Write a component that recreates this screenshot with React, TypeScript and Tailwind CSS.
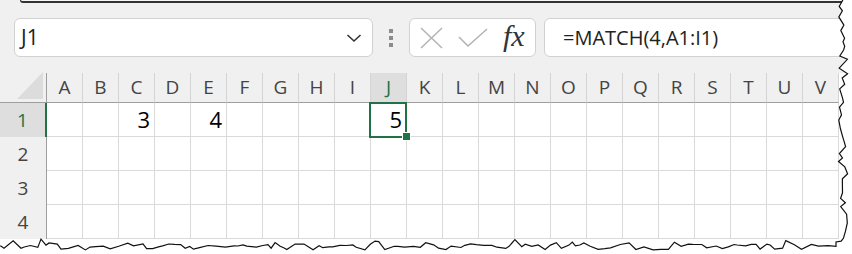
import React from "react";

const cols = "ABCDEFGHIJKLMNOPQRSTUV".split("");
const rows = [1, 2, 3, 4];
const values: Record<string, string> = { C1: "3", E1: "4", J1: "5" };

// deterministic jitter for the torn paper edge
function rng(seed: number) {
  let s = seed;
  return () => {
    s = (s * 9301 + 49297) % 233280;
    return s / 233280;
  };
}

function TornEdge() {
  const r = rng(7);
  const right: [number, number][] = [];
  let y = 0;
  while (y < 242) {
    right.push([838 + r() * 10, y]);
    y += 3 + r() * 6;
  }
  right.push([836, 242]);
  const bottom: [number, number][] = [];
  let x = 836;
  while (x > 0) {
    const bump = r() > 0.85 ? -5 : 0;
    bottom.push([x, 244 + r() * 6 + bump]);
    x -= 3 + r() * 7;
  }
  bottom.push([0, 246]);
  const line = [...right, ...bottom];
  const pts = line.map(p => `${p[0].toFixed(1)},${p[1].toFixed(1)}`).join(" ");
  const fill = `852,0 ${pts} 0,254 852,254`;
  return (
    <svg className="absolute left-0 top-0 pointer-events-none z-20" width={852} height={254}>
      <polygon points={fill} fill="#ffffff" />
      <polyline points={pts} fill="none" stroke="#111" strokeWidth={1.2} />
    </svg>
  );
}

function FormulaBar() {
  return (
    <div className="h-[73px] bg-[#f0f0f0] flex flex-col">
      <div className="h-[3px] ml-[20px] border-b-2 border-l border-[#333] rounded-bl-[6px] bg-[#f7f7f7]" />
      <div className="flex items-center h-[39px] mt-[15px] pl-[14px]">
        <div className="shrink-0 w-[359px] h-full bg-white border border-[#d1d1d1] rounded-[6px] flex items-center pl-[6px] pr-[10px]">
          <span className="text-[21px] text-[#222] flex-1">J1</span>
          <svg width="16" height="10" viewBox="0 0 16 10">
            <path d="M1.5 2 L8 8 L14.5 2" fill="none" stroke="#333" strokeWidth="1.6" />
          </svg>
        </div>
        <div className="shrink-0 w-[36px] flex flex-col items-center gap-[3px]">
          <div className="w-[4px] h-[4px] bg-[#8c8c8c]" />
          <div className="w-[4px] h-[4px] bg-[#8c8c8c]" />
          <div className="w-[4px] h-[4px] bg-[#8c8c8c]" />
        </div>
        <div className="shrink-0 w-[127px] h-full bg-white border border-[#d1d1d1] rounded-[6px] flex items-center pl-[10px] gap-[15px]">
          <svg width="23" height="22" viewBox="0 0 23 22">
            <path d="M1 1 L22 21 M22 1 L1 21" stroke="#b3b3b3" strokeWidth="1.5" />
          </svg>
          <svg width="30" height="20" viewBox="0 0 30 20">
            <path d="M1 9 L10 18 L29 1" fill="none" stroke="#b3b3b3" strokeWidth="1.5" />
          </svg>
          <span className="text-[30px] italic text-[#333] leading-none mt-[-4px]" style={{ fontFamily: '"Liberation Serif", serif' }}>
            fx
          </span>
        </div>
        <div className="shrink-0 ml-[8px] w-[330px] h-full bg-white border border-[#d1d1d1] rounded-[6px] flex items-center pl-[18px]">
          <span className="text-[20px] text-[#222]">=MATCH(4,A1:I1)</span>
        </div>
      </div>
    </div>
  );
}

function Grid() {
  return (
    <div className="grid grid-cols-[47px_repeat(22,36px)] grid-rows-[30px_repeat(4,34px)]">
      <div className="border-r border-b border-[#9e9e9e] bg-[#f0f0f0] flex items-end justify-end pr-[3px] pb-[3px]">
        <svg width="26" height="27" viewBox="0 0 26 27">
          <polygon points="26,0 26,27 0,27" fill="#dcdcdc" />
        </svg>
      </div>
      {cols.map(c => (
        <div
          key={c}
          className={`border-b border-b-[#9e9e9e] border-r border-r-[#d4d4d4] flex items-center justify-center text-[19px] ${
            c === "J" ? "bg-[#dedede] text-[#217346]" : "bg-[#f0f0f0] text-[#444]"
          }`}
        >
          {c}
        </div>
      ))}
      {rows.map(r => (
        <React.Fragment key={r}>
          <div
            className={`flex items-center justify-center text-[19px] border-r ${
              r === 1 ? "bg-[#dedede] text-[#217346] border-r-2 border-[#217346]" : "bg-[#f0f0f0] text-[#444] border-[#9e9e9e]"
            }`}
          >
            {r}
          </div>
          {cols.map(c => {
            const id = `${c}${r}`;
            const sel = id === "J1";
            return (
              <div
                key={id}
                className={`relative border-r border-b border-[#dadada] bg-white flex items-center justify-end pr-[4px] text-[22px] text-black ${sel ? "z-10" : ""}`}
              >
                {values[id]}
                {sel && (
                  <>
                    <div className="absolute -left-[2px] -top-px w-[38px] h-[36px] border-2 border-[#217346]" />
                    <div className="absolute -right-[5px] -bottom-[5px] w-[9px] h-[9px] bg-[#217346] border border-white" />
                  </>
                )}
              </div>
            );
          })}
        </React.Fragment>
      ))}
    </div>
  );
}

export default function App() {
  return (
    <div className="relative w-[852px] h-[254px] overflow-hidden bg-white" style={{ fontFamily: '"Open Sans", "Noto Sans", sans-serif' }}>
      <FormulaBar />
      <Grid />
      <TornEdge />
    </div>
  );
}
